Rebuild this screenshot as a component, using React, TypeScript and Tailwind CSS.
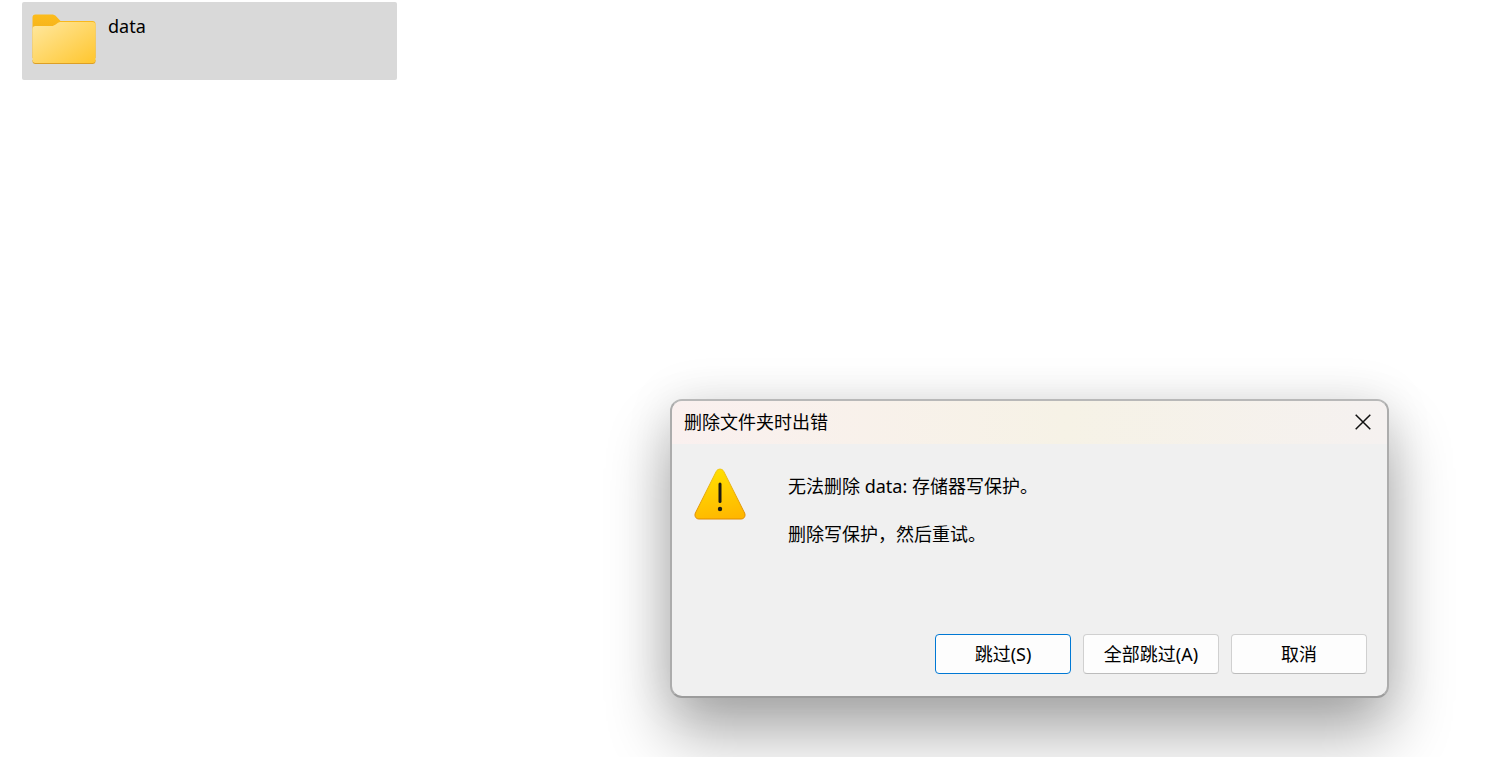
import { useState } from 'react';

const FONT = "font-['Noto_Sans','Noto_Sans_CJK_SC',sans-serif]";

function FolderIcon() {
  return (
    <svg width="64" height="51" viewBox="0 0 64 51" aria-hidden="true" className="shrink-0">
      <defs>
        <linearGradient id="folder-front" x1="0" y1="0" x2="1" y2="1">
          <stop offset="0" stopColor="#ffe8a0" />
          <stop offset="1" stopColor="#ffc62e" />
        </linearGradient>
        <linearGradient id="folder-back" x1="0" y1="0" x2="0" y2="1">
          <stop offset="0" stopColor="#fcbc1c" />
          <stop offset="1" stopColor="#e8a51a" />
        </linearGradient>
      </defs>
      <path
        d="M.5 3.500a3 3 0 0 1 3-3h16c2 0 3.600.6 4.800 2L28.500 7H60.500a3 3 0 0 1 3 3v34H.5z"
        fill="url(#folder-back)"
      />
      <path d="M.5 46v1a3 3 0 0 0 3 3h57a3 3 0 0 0 3-3V46z" fill="#dc9f26" />
      <path
        d="M.5 15a3 3 0 0 1 3-3h16c1.600 0 3-.6 4.200-1.500L26 8.800c.8-.6 1.500-.8 2.500-.8h32a3 3 0 0 1 3 3v35a3 3 0 0 1-3 3h-57a3 3 0 0 1-3-3z"
        fill="url(#folder-front)"
      />
    </svg>
  );
}

function WarningIcon() {
  return (
    <svg width="52" height="52" viewBox="0 0 52 52" aria-hidden="true" className="shrink-0">
      <defs>
        <linearGradient id="warning-fill" x1="0.4" y1="0" x2="0.6" y2="1">
          <stop offset="0" stopColor="#ffe000" />
          <stop offset="1" stopColor="#ffb700" />
        </linearGradient>
        <linearGradient id="warning-edge" x1="0" y1="0" x2="0" y2="1">
          <stop offset="0" stopColor="#edc619" />
          <stop offset="1" stopColor="#e08a00" />
        </linearGradient>
      </defs>
      <path
        d="M22.200 3.500C23.800.3 28.200.3 29.800 3.500L50.600 45c1.300 2.900-.4 6-3.500 6H4.900C1.800 51 .1 47.900 1.400 45z"
        fill="url(#warning-fill)"
        stroke="url(#warning-edge)"
        strokeWidth="1"
      />
      <path d="M26 16v17.500" stroke="#1c1a14" strokeWidth="3" strokeLinecap="round" />
      <circle cx="26" cy="41" r="2.200" fill="#1c1a14" />
    </svg>
  );
}

function CloseIcon() {
  return (
    <svg width="16" height="16" viewBox="0 0 16 16" aria-hidden="true">
      <path d="M.7.7l14.600 14.600M15.300.7L.7 15.300" stroke="#111" strokeWidth="1.500" fill="none" />
    </svg>
  );
}

const actions = [
  { id: 'skip', label: '跳过(S)' },
  { id: 'skip-all', label: '全部跳过(A)' },
  { id: 'cancel', label: '取消' },
];

function ErrorDialog({ onClose }: { onClose: () => void }) {
  return (
    <div
      role="dialog"
      aria-labelledby="dialog-title"
      className="absolute left-[670px] top-[399px] w-[719px] overflow-hidden rounded-xl border-2 border-t-[#b8b8b8] border-x-[#acacac] border-b-[#9c9c9c] bg-[#f0f0f0] shadow-[0_36px_64px_rgba(0,0,0,0.33),0_0_48px_rgba(0,0,0,0.1)]"
    >
      <header className="flex h-[43px] items-center justify-between bg-linear-to-r from-[#faf0ef] via-[#f6f2e6] via-55% to-[#f5f1f0] pb-0.5 pl-3 pr-4">
        <h1 id="dialog-title">删除文件夹时出错</h1>
        <button type="button" aria-label="关闭" onClick={onClose}>
          <CloseIcon />
        </button>
      </header>

      <div className="flex gap-[42px] px-[22px] pt-6">
        <WarningIcon />
        <div className="space-y-6 pt-1.5">
          <p>无法删除 data: 存储器写保护。</p>
          <p>删除写保护，然后重试。</p>
        </div>
      </div>

      <footer className="flex justify-end gap-3 px-5 pb-[22px] pt-22">
        {actions.map((action) => (
          <button
            key={action.id}
            type="button"
            onClick={onClose}
            className={`h-10 w-[136px] rounded border bg-[#fdfdfd] ${
              action.id === 'skip' ? 'border-[#0078d4]' : 'border-[#d0d0d0] border-b-[#bcbcbc]'
            }`}
          >
            {action.label}
          </button>
        ))}
      </footer>
    </div>
  );
}

function App() {
  const [open, setOpen] = useState(true);

  return (
    <main
      className={`relative min-h-screen overflow-hidden bg-white pl-[22px] pt-0.5 text-lg leading-6 text-black ${FONT}`}
    >
      <div className="flex h-[78px] w-[375px] items-start gap-3 rounded-xs bg-[#d9d9d9] px-2.5 pt-3">
        <FolderIcon />
        <span>data</span>
      </div>
      {open && <ErrorDialog onClose={() => setOpen(false)} />}
    </main>
  );
}

export default App;
